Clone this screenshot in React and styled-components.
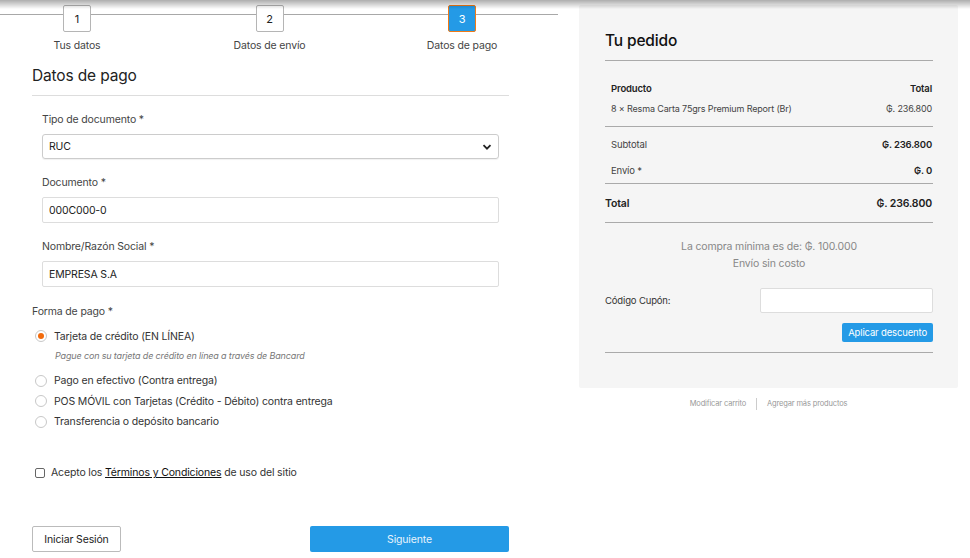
import React from "react";
import styled, { createGlobalStyle } from "styled-components";

const GlobalStyle = createGlobalStyle`
  html, body {
    margin: 0;
    padding: 0;
    background: #fff;
    font-family: "Inter", "Liberation Sans", sans-serif;
    letter-spacing: -0.15px;
    color: #333;
  }
  body::before {
    content: "";
    position: fixed;
    top: 0;
    left: 0;
    right: 0;
    height: 9px;
    background: linear-gradient(to bottom, rgba(0,0,0,0.32), rgba(0,0,0,0));
    z-index: 10;
    pointer-events: none;
  }
`;

const Page = styled.div`
  display: flex;
  align-items: flex-start;
  gap: 21px;
  width: 970px;
`;

const LeftColumn = styled.div`
  width: 558px;
`;

const Stepper = styled.div`
  position: relative;
  width: 539px;
  display: flex;
  justify-content: space-between;
  padding-top: 5px;
  &::before {
    content: "";
    position: absolute;
    top: 14px;
    left: 0;
    width: 558px;
    height: 1px;
    background: #a8a8a8;
  }
`;

const Step = styled.div`
  position: relative;
  width: 154px;
  display: flex;
  flex-direction: column;
  align-items: center;
`;

const StepBox = styled.div`
  width: 26px;
  height: 25px;
  display: flex;
  align-items: center;
  justify-content: center;
  font-size: 11px;
  border-radius: 2px;
  background: ${(p) => (p.$active ? "#249ae6" : "#fff")};
  color: ${(p) => (p.$active ? "#fff" : "#222")};
  border: 1px solid ${(p) => (p.$active ? "#f07a16" : "#b5b5b5")};
`;

const StepLabel = styled.div`
  margin-top: 7px;
  font-size: 10.5px;
  color: #444;
`;

const FormArea = styled.div`
  padding: 0 49px 0 32px;
`;

const Heading = styled.h2`
  margin: 14px 0 0;
  padding-bottom: 10px;
  font-size: 15.5px;
  font-weight: 400;
  color: #222;
  border-bottom: 1px solid #ddd;
`;

const Fields = styled.div`
  padding: 17px 10px 0;
  display: flex;
  flex-direction: column;
`;

const Label = styled.label`
  display: block;
  font-size: 10.5px;
  color: #444;
  margin-bottom: 8px;
`;

const FieldGroup = styled.div`
  margin-bottom: 17px;
`;

const Input = styled.input`
  box-sizing: border-box;
  width: 100%;
  height: 26px;
  border: 1px solid #ddd;
  border-radius: 2px;
  padding: 0 6px;
  font-family: inherit;
  letter-spacing: inherit;
  font-size: 10.5px;
  color: #222;
  background: #fff;
  outline: none;
`;

const SelectBox = styled.div`
  box-sizing: border-box;
  height: 25px;
  border: 1px solid #ccc;
  border-radius: 3px;
  padding: 0 6px;
  display: flex;
  align-items: center;
  justify-content: space-between;
  font-size: 10.5px;
  color: #222;
  box-shadow: 0 1px 1px rgba(0,0,0,0.06);
`;

const PaymentTitle = styled.div`
  font-size: 10.5px;
  color: #444;
  margin-top: 1px;
`;

const RadioList = styled.div`
  padding: 8px 0 0 3px;
  display: flex;
  flex-direction: column;
`;

const RadioRow = styled.div`
  display: flex;
  align-items: center;
  gap: 7px;
  height: 20.5px;
  font-size: 10.5px;
  color: #333;
`;

const RadioCircle = styled.span`
  box-sizing: border-box;
  width: 12px;
  height: 12px;
  border-radius: 50%;
  border: 1px solid #c8c8c8;
  background: #fff;
  display: flex;
  align-items: center;
  justify-content: center;
  &::after {
    content: "";
    width: 6px;
    height: 6px;
    border-radius: 50%;
    background: ${(p) => (p.$checked ? "#f26b0c" : "transparent")};
  }
`;

const RadioHint = styled.div`
  font-size: 9px;
  font-style: italic;
  color: #777;
  line-height: 12px;
  padding: 3px 0 9px 20px;
`;

const TermsRow = styled.div`
  display: flex;
  align-items: center;
  gap: 6px;
  margin: 34px 0 0 3px;
  font-size: 10.5px;
  color: #333;
`;

const CheckSquare = styled.span`
  box-sizing: border-box;
  width: 10px;
  height: 10px;
  border: 1px solid #666;
  border-radius: 2px;
  background: #fff;
`;

const TermsLink = styled.span`
  color: #111;
  text-decoration: underline;
`;

const ButtonRow = styled.div`
  display: flex;
  justify-content: space-between;
  margin-top: 47px;
`;

const OutlineButton = styled.button`
  width: 89px;
  height: 26px;
  border: 1px solid #bbb;
  border-radius: 2px;
  background: #fff;
  font-family: inherit;
  letter-spacing: inherit;
  font-size: 10.5px;
  color: #222;
`;

const PrimaryButton = styled.button`
  width: 199px;
  height: 26px;
  border: none;
  border-radius: 2px;
  background: #249ae6;
  color: #e8f3fc;
  font-family: inherit;
  letter-spacing: inherit;
  font-size: 10.5px;
`;

const RightColumn = styled.div`
  width: 379px;
  padding-top: 5px;
`;

const OrderPanel = styled.div`
  background: #f5f5f5;
  border-radius: 2px;
  padding: 26px 25px 36px 26px;
  height: 383px;
  box-sizing: border-box;
`;

const OrderTitle = styled.h3`
  margin: 0;
  font-size: 15.5px;
  font-weight: 500;
  color: #111;
  padding-bottom: 10px;
  border-bottom: 1px solid #aaa;
`;

const TableBlock = styled.div`
  padding: ${(p) => p.$pad || "0"};
  border-bottom: 1px solid #aaa;
`;

const Row = styled.div`
  display: flex;
  justify-content: space-between;
  align-items: center;
  height: ${(p) => p.$h || "20px"};
  padding: 0 1px 0 ${(p) => (p.$flush ? "0" : "6px")};
  font-size: ${(p) => p.$size || "9.5px"};
  font-weight: ${(p) => (p.$bold ? 600 : 400)};
  color: ${(p) => (p.$bold ? "#222" : "#444")};
`;

const Value = styled.span`
  font-weight: ${(p) => (p.$bold ? 600 : 400)};
  color: ${(p) => (p.$bold ? "#222" : "#444")};
`;

const Notice = styled.div`
  text-align: center;
  font-size: 10.5px;
  color: #888;
  line-height: 17px;
  padding-top: 15px;
`;

const CouponRow = styled.div`
  display: flex;
  justify-content: space-between;
  align-items: center;
  margin-top: 16px;
  font-size: 9.5px;
  color: #333;
`;

const CouponInput = styled.input`
  box-sizing: border-box;
  width: 173px;
  height: 25px;
  border: 1px solid #ddd;
  border-radius: 2px;
  background: #fff;
  outline: none;
`;

const ApplyRow = styled.div`
  display: flex;
  justify-content: flex-end;
  padding: 10px 0 10px;
  border-bottom: 1px solid #aaa;
`;

const ApplyButton = styled.button`
  height: 19px;
  padding: 0 6px;
  border: none;
  border-radius: 2px;
  background: #249ae6;
  color: #fff;
  font-family: inherit;
  letter-spacing: inherit;
  font-size: 9.5px;
`;

const FooterLinks = styled.div`
  display: flex;
  justify-content: center;
  align-items: center;
  margin-top: 10px;
  font-size: 7.5px;
  color: #999;
`;

const FooterLink = styled.span`
  padding: 0 ${(p) => (p.$last ? "0" : "10px")} 0 ${(p) => (p.$last ? "10px" : "0")};
  border-right: ${(p) => (p.$last ? "none" : "1px solid #ccc")};
  line-height: 12px;
`;

const steps = [
  { n: 1, label: "Tus datos" },
  { n: 2, label: "Datos de envío" },
  { n: 3, label: "Datos de pago", active: true },
];

const payments = [
  { label: "Tarjeta de crédito (EN LÍNEA)", checked: true, hint: "Pague con su tarjeta de crédito en línea a través de Bancard" },
  { label: "Pago en efectivo (Contra entrega)" },
  { label: "POS MÓVIL con Tarjetas (Crédito - Débito) contra entrega" },
  { label: "Transferencia o depósito bancario" },
];

const Chevron = () => (
  <svg width="10" height="10" viewBox="0 0 10 10">
    <path d="M1.5 3.2 L5 6.7 L8.5 3.2" fill="none" stroke="#222" strokeWidth="1.8" />
  </svg>
);

export default function App() {
  return (
    <>
      <GlobalStyle />
      <Page>
        <LeftColumn>
          <Stepper>
            {steps.map((s) => (
              <Step key={s.n}>
                <StepBox $active={s.active}>{s.n}</StepBox>
                <StepLabel>{s.label}</StepLabel>
              </Step>
            ))}
          </Stepper>
          <FormArea>
            <Heading>Datos de pago</Heading>
            <Fields>
              <FieldGroup>
                <Label>Tipo de documento *</Label>
                <SelectBox>
                  <span>RUC</span>
                  <Chevron />
                </SelectBox>
              </FieldGroup>
              <FieldGroup>
                <Label>Documento *</Label>
                <Input defaultValue="000C000-0" />
              </FieldGroup>
              <FieldGroup>
                <Label>Nombre/Razón Social *</Label>
                <Input defaultValue="EMPRESA S.A" />
              </FieldGroup>
            </Fields>
            <PaymentTitle>Forma de pago *</PaymentTitle>
            <RadioList>
              {payments.map((p) => (
                <React.Fragment key={p.label}>
                  <RadioRow>
                    <RadioCircle $checked={p.checked} />
                    {p.label}
                  </RadioRow>
                  {p.hint && <RadioHint>{p.hint}</RadioHint>}
                </React.Fragment>
              ))}
            </RadioList>
            <TermsRow>
              <CheckSquare />
              <span>
                Acepto los <TermsLink>Términos y Condiciones</TermsLink> de uso del sitio
              </span>
            </TermsRow>
            <ButtonRow>
              <OutlineButton>Iniciar Sesión</OutlineButton>
              <PrimaryButton>Siguiente</PrimaryButton>
            </ButtonRow>
          </FormArea>
        </LeftColumn>
        <RightColumn>
          <OrderPanel>
            <OrderTitle>Tu pedido</OrderTitle>
            <TableBlock $pad="17px 0 8px">
              <Row $bold>
                <span>Producto</span>
                <span>Total</span>
              </Row>
              <Row $size="9px">
                <span>8 × Resma Carta 75grs Premium Report (Br)</span>
                <span>₲. 236.800</span>
              </Row>
            </TableBlock>
            <TableBlock $pad="4px 0 0">
              <Row $h="26px">
                <span>Subtotal</span>
                <Value $bold>₲. 236.800</Value>
              </Row>
              <Row $h="26px">
                <span>Envío *</span>
                <Value $bold>₲. 0</Value>
              </Row>
            </TableBlock>
            <TableBlock>
              <Row $flush $bold $size="10.5px" $h="38px">
                <span>Total</span>
                <span>₲. 236.800</span>
              </Row>
            </TableBlock>
            <Notice>
              La compra mínima es de: ₲. 100.000
              <br />
              Envío sin costo
            </Notice>
            <CouponRow>
              <span>Código Cupón:</span>
              <CouponInput />
            </CouponRow>
            <ApplyRow>
              <ApplyButton>Aplicar descuento</ApplyButton>
            </ApplyRow>
          </OrderPanel>
          <FooterLinks>
            <FooterLink>Modificar carrito</FooterLink>
            <FooterLink $last>Agregar más productos</FooterLink>
          </FooterLinks>
        </RightColumn>
      </Page>
    </>
  );
}
